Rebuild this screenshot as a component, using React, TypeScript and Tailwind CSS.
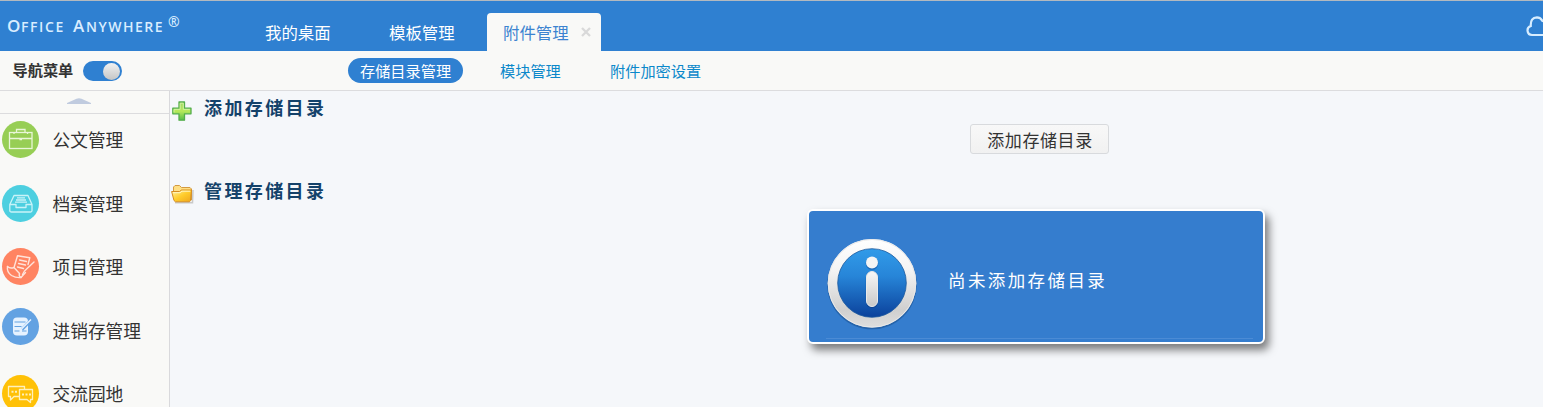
import React from "react";

type MenuItem = { label: string; color: string; shift: string; height: string; icon: React.ReactNode };

const BriefcaseIcon = () => (
  <svg width="37" height="37" viewBox="0 0 37 37" fill="none" stroke="#e9f6d8" strokeWidth="1.3">
    <rect x="7.5" y="11.5" width="22.5" height="16" />
    <path d="M7.5 17.5H30M14.500 11.500V8.500H23V11.500M12 11.500V13M25.500 11.500V13" />
    <path d="M17.500 18.500h2.500" />
  </svg>
);

const TrayIcon = () => (
  <svg width="37" height="37" viewBox="0 0 37 37" fill="none" stroke="#c9f3f8" strokeWidth="1.3" strokeLinejoin="round">
    <path d="M7.800 19.500 12 10.500H26L30 19.500V25.500Q30 27 28.500 27H9.500Q7.800 27 7.800 25.500ZM7.800 19.500H14V22.500H24V19.500H30" />
    <path d="M15 12.800H23M14 15H24M13 17.200H25" />
  </svg>
);

const ScrollIcon = () => (
  <svg width="37" height="37" viewBox="0 0 37 37" fill="none" stroke="#ffe3da" strokeWidth="1.4" strokeLinejoin="round" strokeLinecap="round">
    <path d="M12 19.500 15.500 7.800 27.800 9.800 26 16.500M5.500 18.500Q8 21 12 19.500L17.500 25.500Q16.500 28.500 19 29.500L23.500 24.500" />
    <path d="M5.500 18.500Q4.500 24 9.500 27.500 14 30 19 29.500" />
    <path d="M17.500 12 24.500 13.500M16.500 15.500 23.500 17M15.500 19 21.500 20.500" />
    <path d="M32 14 22.500 23 20.500 26.500" />
  </svg>
);

const LedgerIcon = () => (
  <svg width="37" height="37" viewBox="0 0 37 37" fill="none">
    <rect x="11" y="9.500" width="15" height="18" rx="4" fill="#e6f2ff" />
    <path d="M12.500 14H23.500M12.500 18.500H19.500M12.500 23H17.500M20 23H24.500" stroke="#63a2e2" strokeWidth="1.1" />
    <path d="M29.500 11.500 20 21.500" stroke="#63a2e2" strokeWidth="3" />
    <path d="M29 11.500 20 20.500 18.500 23" stroke="#e6f2ff" strokeWidth="1.4" />
  </svg>
);

const ChatIcon = () => (
  <svg width="37" height="37" viewBox="0 0 37 37" fill="none" stroke="#fff0bb" strokeWidth="1.3" strokeLinejoin="round">
    <path d="M17.500 21.500H12L8.500 25V21.500H6.500V11.500H22.500V14.500" />
    <path d="M17.500 14.500H30.500V24.500H28.500V27.500L25 24.500H17.500Z" />
    <path d="M9.500 16.700h2M13 16.700h2M20 19.500h2M23.500 19.500h2M27 19.500h2" strokeWidth="2" />
  </svg>
);

const menu: MenuItem[] = [
  { label: "公文管理", color: "bg-[#97ce55]", shift: "mt-0", height: "h-16", icon: <BriefcaseIcon /> },
  { label: "档案管理", color: "bg-[#4dcfe0]", shift: "mt-0", height: "h-[63px]", icon: <TrayIcon /> },
  { label: "项目管理", color: "bg-[#ff8462]", shift: "mt-0", height: "h-16", icon: <ScrollIcon /> },
  { label: "进销存管理", color: "bg-[#63a2e2]", shift: "-mt-1", height: "h-[63px]", icon: <LedgerIcon /> },
  { label: "交流园地", color: "bg-[#ffc107]", shift: "mt-0", height: "h-16", icon: <ChatIcon /> },
];

const PlusIcon = () => (
  <svg width="20" height="20" viewBox="0 0 20 20" className="mt-px ml-px shrink-0">
    <defs>
      <linearGradient id="plus" x1="0" y1="0" x2="0" y2="1">
        <stop offset="0" stopColor="#a2d867" />
        <stop offset=".5" stopColor="#b7e95c" />
        <stop offset="1" stopColor="#55bd49" />
      </linearGradient>
    </defs>
    <path d="M7 1H12.500V7.200H19V12.800H12.500V19.200H7V12.800H.8V7.200H7Z" fill="url(#plus)" stroke="#53ad4b" strokeWidth="1.300" strokeLinejoin="round" />
    <path d="M8.200 2.200H11.300V8.400H17.800M2 11.500V8.400H8.200V2.200" fill="none" stroke="#d3f4a5" strokeWidth=".9" />
  </svg>
);

const FolderIcon = () => (
  <svg width="23" height="20" viewBox="0 0 23 20" className="shrink-0">
    <defs>
      <linearGradient id="folder" x1="0" y1="0" x2="1" y2="1">
        <stop offset="0" stopColor="#fff1a1" />
        <stop offset=".5" stopColor="#ffcd2c" />
        <stop offset="1" stopColor="#efa51b" />
      </linearGradient>
    </defs>
    <path d="M4 18.800H21.500L22 6" stroke="#c9c9c9" strokeWidth="1.500" fill="none" />
    <path d="M2.500 9V3L4 1.500H8.500L10.500 3.500H19L20.500 5V16Z" fill="#ffdf84" stroke="#d39a42" />
    <path d="M.6 7.500H8.500L10.500 6H20.500L19.500 16.500 18.500 17.800H4.500L3 16.500Z" fill="url(#folder)" stroke="#d58d20" strokeLinejoin="round" />
    <path d="M2 8.700H9L11 7.200H19.300" fill="none" stroke="#fff7c7" />
  </svg>
);

const InfoIcon = () => (
  <svg width="92" height="94" viewBox="0 0 92 94" className="shrink-0">
    <defs>
      <linearGradient id="ring" x1="0" y1="0" x2="0" y2="1">
        <stop offset="0" stopColor="#fff" />
        <stop offset=".35" stopColor="#f4f4f4" />
        <stop offset=".8" stopColor="#cfcfcf" />
        <stop offset="1" stopColor="#dedede" />
      </linearGradient>
      <linearGradient id="disc" x1="0" y1="0" x2="0" y2="1">
        <stop offset="0" stopColor="#319be9" />
        <stop offset=".4" stopColor="#2785d8" />
        <stop offset="1" stopColor="#0b419b" />
      </linearGradient>
      <linearGradient id="stem" x1="0" y1="0" x2="0" y2="1">
        <stop offset="0" stopColor="#f7f7f7" />
        <stop offset="1" stopColor="#c9c9c9" />
      </linearGradient>
    </defs>
    <circle cx="46" cy="47.500" r="44.800" fill="#1c5698" opacity=".65" />
    <circle cx="46" cy="46.300" r="44.300" fill="url(#ring)" />
    <circle cx="46" cy="46.300" r="43.800" fill="none" stroke="#e9e9e9" />
    <circle cx="46" cy="46" r="34.300" fill="url(#disc)" stroke="#1d5b9e" strokeWidth=".8" />
    <circle cx="46" cy="26.500" r="6.300" fill="#1451a0" opacity=".6" />
    <circle cx="46" cy="25.500" r="6" fill="#f5f5f5" />
    <rect x="39.800" y="34.500" width="12.400" height="36.500" rx="6.200" fill="#0b3d87" opacity=".6" />
    <rect x="40.500" y="34.500" width="11" height="35" rx="5.500" fill="url(#stem)" stroke="#eaeaea" />
  </svg>
);

const kai = "font-['KaiTi','STKaiti','Noto_Sans_CJK_SC',sans-serif]";

export default function App() {
  return (
    <div className="flex h-[407px] w-full flex-col overflow-hidden bg-[#f5f7fa] font-['Liberation_Sans','Noto_Sans_CJK_SC',sans-serif] text-[#333]">
      <header className="flex h-[51px] shrink-0 overflow-hidden border-t border-[#b3b9bf] bg-[#2f80d1] text-white">
        <div className="flex w-[233px] shrink-0 items-baseline whitespace-nowrap pl-[7px] pt-[13px] font-['Open_Sans',sans-serif] leading-6 font-semibold text-[#d9edff]">
          <span className="w-[14px] text-[17px]">O</span>
          <span className="w-[52px] text-[14px] tracking-[1.6px]">FFICE</span>
          <span className="w-[13px] text-[17px]">A</span>
          <span className="w-[82px] text-[14px] tracking-[1.5px]">NYWHERE</span>
          <span className="-translate-y-[5px] text-[14px]">®</span>
        </div>
        <nav className="flex items-end text-[16.4px] whitespace-nowrap">
          <div className="flex h-[38px] w-[124px] items-center pt-[3px] pl-8">我的桌面</div>
          <div className="flex h-[38px] w-[130px] items-center pt-[3px] pl-8">模板管理</div>
          <div className="flex h-[38px] w-[114px] items-center rounded-t bg-[#f9f9f7] pt-[3px] pl-4 text-[#3c83d0]">
            附件管理
            <svg width="10" height="10" viewBox="0 0 10 10" className="mb-[4px] ml-[12px]" stroke="#d9d9d9" strokeWidth="2.300">
              <path d="M1 1 9 9M9 1 1 9" />
            </svg>
          </div>
        </nav>
        <svg width="28" height="22" viewBox="0 0 28 22" className="-mr-[10px] ml-auto mt-[14px]" fill="none" stroke="#d7edff" strokeWidth="2.200">
          <path d="M7 20A4.600 4.600 0 0 1 5.800 11Q5.200 2.500 12 2.300 15.500 2.300 17.500 6A5 5 0 0 1 22 10.500 5 5 0 0 1 22 20Z" />
        </svg>
      </header>

      <div className="flex h-10 shrink-0 items-center border-b border-[#dcdcde] bg-[#f9f9f7] pb-px text-[15.2px] whitespace-nowrap">
        <div className="w-[70px] shrink-0 pt-[3px] pl-[12.5px] text-[15.2px] font-bold">导航菜单</div>
        <div className="ml-[13px] mt-[2px] flex h-5 w-[39px] shrink-0 items-center justify-end rounded-full bg-[#2f80d1] pr-[2px]">
          <div className="size-[17px] rounded-full bg-linear-to-b from-[#f2f2f2] to-[#c5c5c5]" />
        </div>
        <nav className="ml-[226px] flex items-center text-[#0b88ca]">
          <div className="mt-px flex h-[25px] w-[115px] items-center justify-center rounded-full bg-[#2f80d1] pt-[3px] text-white">存储目录管理</div>
          <div className="ml-[37px] w-[110px] pt-[4px]">模块管理</div>
          <div className="pt-[4px]">附件加密设置</div>
        </nav>
      </div>

      <div className="flex min-h-0 flex-1">
        <aside className="flex w-[170px] shrink-0 flex-col overflow-hidden border-r border-[#d9d9dc] bg-[#f9f9f7]">
          <div className="flex h-[23px] shrink-0 justify-center border-b border-[#dcdcde] pr-[11px] pt-[7px]">
            <svg width="24" height="6" viewBox="0 0 24 6">
              <path d="M0 6V5L9.500 .8Q12 -.5 14.500 .8L24 5V6Z" fill="#c0cbdf" />
            </svg>
          </div>
          <ul className="pt-[7px]">
            {menu.map((m) => (
              <li key={m.label} className={`flex items-start pl-[2px] ${m.height}`}>
                <span className={`size-[37px] shrink-0 overflow-hidden rounded-full ${m.color} ${m.shift}`}>{m.icon}</span>
                <span className="ml-[13.5px] pt-[7px] text-[17.7px] leading-[27px] whitespace-nowrap">{m.label}</span>
              </li>
            ))}
          </ul>
        </aside>

        <main className="min-w-0 flex-1 pl-px">
          <div className={`flex h-[33px] pt-[9px] ${kai}`}>
            <PlusIcon />
            <h2 className="-mt-[6px] ml-[12px] text-[18px] font-bold leading-[27px] tracking-[2.4px] text-[#14426a]">添加存储目录</h2>
          </div>
          <div className="pl-[799px]">
            <button className={`flex h-[30px] w-[139px] items-center justify-center rounded-[3px] border border-[#d8dadd] bg-linear-to-b from-[#f8f8f8] to-[#f1f1f1] pt-px pl-px text-[17px] tracking-[0.6px] text-[#333] ${kai}`}>
              添加存储目录
            </button>
          </div>
          <div className={`mt-[30px] flex h-[25px] ${kai}`}>
            <FolderIcon />
            <h2 className="-mt-[7px] ml-[10px] text-[18px] font-bold leading-[27px] tracking-[2.4px] text-[#14426a]">管理存储目录</h2>
          </div>
          <div className="ml-[636px] flex h-[135px] w-[458px] flex-col justify-between rounded-md border-2 border-white bg-[#357dce] pl-[17px] pt-[26px] shadow-[4px_6px_9px_0px_rgba(0,0,0,0.5)]">
            <div className="flex h-24 items-start">
              <InfoIcon />
              <div className={`ml-[30px] pt-[30px] text-[17.5px] leading-[26px] tracking-[2.4px] text-white ${kai}`}>尚未添加存储目录</div>
            </div>
            <div className="mr-2.5 mb-[3px] h-px bg-[#4b8bd5]" />
          </div>
        </main>
      </div>
    </div>
  );
}
